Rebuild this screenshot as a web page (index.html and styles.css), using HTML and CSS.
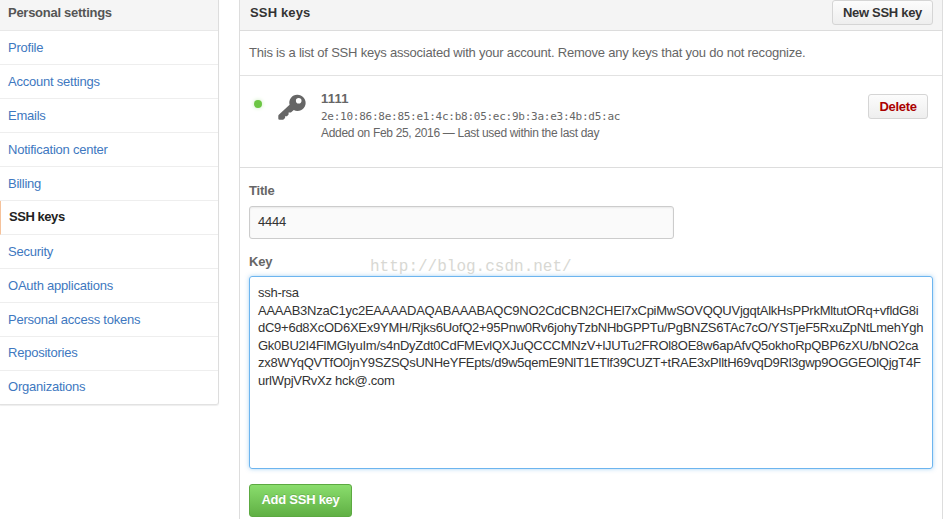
FILE: index.html
```
<!DOCTYPE html>
<html lang="en">
<head>
<meta charset="utf-8">
<title>SSH keys</title>
<link rel="stylesheet" href="styles.css">
</head>
<body>
<div class="page">
  <nav class="menu">
    <h3 class="menu-heading">Personal settings</h3>
    <a class="menu-item">Profile</a>
    <a class="menu-item">Account settings</a>
    <a class="menu-item">Emails</a>
    <a class="menu-item">Notification center</a>
    <a class="menu-item">Billing</a>
    <a class="menu-item selected">SSH keys</a>
    <a class="menu-item">Security</a>
    <a class="menu-item">OAuth applications</a>
    <a class="menu-item">Personal access tokens</a>
    <a class="menu-item">Repositories</a>
    <a class="menu-item last">Organizations</a>
  </nav>
  <main class="box">
    <header class="box-header">
      <h3 class="box-title">SSH keys</h3>
      <button class="btn btn-new">New SSH key</button>
    </header>
    <p class="intro">This is a list of SSH keys associated with your account. Remove any keys that you do not recognize.</p>
    <section class="key-row">
      <span class="status"></span>
      <svg class="key-icon" width="28" height="27" viewBox="0 0 28 27"><path fill="#666" fill-rule="evenodd" d="M19.200 .8a7.800 7.800 0 0 0-7.600 10L.8 20.800a1.500 1.500 0 0 0-.5 1.100v2.600a1.300 1.300 0 0 0 1.300 1.300h3.600l1.900-1.900v-1.700h1.900l1.600-1.600v-2h2.300l2.900-2.500A8.100 8.100 0 1 0 19.200 .8zm1.500 3.200a2.800 2.800 0 1 1 0 5.600 2.800 2.800 0 0 1 0-5.600z"/></svg>
      <div class="key-info">
        <strong class="key-name">1111</strong>
        <code class="fingerprint">2e:10:86:8e:85:e1:4c:b8:05:ec:9b:3a:e3:4b:d5:ac</code>
        <span class="added">Added on Feb 25, 2016 — Last used within the last day</span>
      </div>
      <button class="btn btn-delete">Delete</button>
    </section>
    <form class="form">
      <label class="label">Title</label>
      <div class="input">4444</div>
      <label class="label">Key</label>
      <div class="textarea">
        <div class="line">ssh-rsa</div>
        <div class="line">AAAAB3NzaC1yc2EAAAADAQABAAABAQC9NO2CdCBN2CHEl7xCpiMwSOVQQUVjgqtAlkHsPPrkMltutORq+vfldG8i</div>
        <div class="line">dC9+6d8XcOD6XEx9YMH/Rjks6UofQ2+95Pnw0Rv6johyTzbNHbGPPTu/PgBNZS6TAc7cO/YSTjeF5RxuZpNtLmehYgh</div>
        <div class="line">Gk0BU2I4FlMGlyuIm/s4nDyZdt0CdFMEvlQXJuQCCCMNzV+lJUTu2FROl8OE8w6apAfvQ5okhoRpQBP6zXU/bNO2ca</div>
        <div class="line">zx8WYqQVTfO0jnY9SZSQsUNHeYFEpts/d9w5qemE9NlT1ETlf39CUZT+tRAE3xPlltH69vqD9Rl3gwp9OGGEOlQjgT4F</div>
        <div class="line">urlWpjVRvXz hck@.com</div>
      </div>
      <button class="btn btn-add" type="button">Add SSH key</button>
    </form>
    <span class="watermark">http://blog.csdn.net/</span>
  </main>
</div>
</body>
</html>
```
FILE: styles.css
```
* { box-sizing: border-box; }
body {
  margin: 0;
  height: 519px;
  overflow: hidden;
  background: #fff;
  color: #666;
  font: 13px/18px "Liberation Sans", Arial, sans-serif;
}
h3, p { margin: 0; font-size: 13px; }
.page { display: flex; align-items: flex-start; gap: 20px; height: 519px; }
.menu {
  width: 219px;
  border-right: 1px solid #ddd;
  border-bottom: 1px solid #e2e2e2;
  border-radius: 0 0 3px 0;
  box-shadow: 0 1px 1px #eee;
  letter-spacing: -.23px;
}
.menu-heading {
  height: 31px;
  padding: 4px 0 0 8px;
  background: #f5f5f5;
  border-bottom: 1px solid #e8e8e8;
  color: #555;
  letter-spacing: -.27px;
}
.menu-item {
  display: block;
  height: 34px;
  padding: 8px 0 0 8px;
  border-bottom: 1px solid #eee;
  color: #4078c0;
}
.menu-item:nth-of-type(n + 10) { padding-top: 7px; }
.menu-item.last { height: 33px; border-bottom: 0; }
.menu-item.selected {
  padding-top: 7px;
  border-left: 1px solid #f5c29b;
  color: #222;
  font-weight: bold;
  letter-spacing: -.45px;
}
.box {
  position: relative;
  width: 704px;
  height: 519px;
  border: solid #ddd;
  border-width: 0 1px;
}
.box-header {
  display: flex;
  justify-content: space-between;
  height: 31px;
  padding: 0 9px 0 10px;
  background: #f4f4f4;
  border-bottom: 1px solid #dcdcdc;
}
.box-title { padding-top: 4px; color: #333; letter-spacing: .15px; }
.btn {
  flex: none;
  padding: 0;
  border: 1px solid #d5d5d5;
  border-radius: 3px;
  background: linear-gradient(#fcfcfc, #eee);
  color: #333;
  font: bold 13px/18px "Liberation Sans", Arial, sans-serif;
  letter-spacing: -.3px;
  white-space: nowrap;
}
.btn-new { width: 101px; height: 25px; }
.intro {
  height: 45px;
  padding: 13px 0 0 9px;
  border-bottom: 1px solid #e2e2e2;
  letter-spacing: -.212px;
  white-space: nowrap;
}
.key-row { display: flex; height: 92px; padding: 18px 14px 0; border-bottom: 1px solid #ddd; }
.status {
  width: 8px;
  height: 8px;
  margin-top: 6px;
  border-radius: 50%;
  background: #6cc644;
  box-shadow: 0 0 4px #c9ebba;
}
.key-icon { margin-left: 16px; flex: none; }
.key-info { display: flex; flex-direction: column; margin: -5px 0 0 15px; flex: 1; white-space: nowrap; }
.key-name { line-height: 19px; letter-spacing: .2px; }
.fingerprint { font: 11px/17px "DejaVu Sans Mono", monospace; letter-spacing: -.257px; }
.added { font-size: 12px; line-height: 17px; letter-spacing: -.315px; }
.btn-delete { width: 60px; height: 25px; color: #a00; }
.form { padding: 14px 9px 0; }
.label { display: block; font-weight: bold; letter-spacing: -.2px; }
.input {
  width: 425px;
  height: 33px;
  margin: 6px 0 14px;
  padding: 6px 8px;
  border: 1px solid #ccc;
  border-radius: 3px;
  background: #fafafa;
  box-shadow: inset 0 1px 2px rgba(0, 0, 0, .07);
  color: #333;
  letter-spacing: -.25px;
}
.textarea {
  width: 684px;
  height: 193px;
  margin: 5px 0 15px;
  padding: 7px 8px;
  border: 1px solid #6db5ef;
  border-radius: 3px;
  box-shadow: 0 0 4px rgba(81, 167, 232, .5);
  color: #333;
  letter-spacing: -.257px;
  line-height: 17.5px;
  white-space: nowrap;
}
.btn-add {
  width: 103px;
  height: 33px;
  padding-bottom: 2px;
  border-color: #5ca941;
  background: linear-gradient(#8add6d, #60b044);
  color: #fff;
  letter-spacing: -.25px;
  text-shadow: 0 -1px 0 rgba(0, 0, 0, .15);
}
.watermark {
  position: absolute;
  left: 130px;
  top: 257px;
  color: #d8d8d3;
  font: 16px/20px "Liberation Mono", monospace;
}
```
